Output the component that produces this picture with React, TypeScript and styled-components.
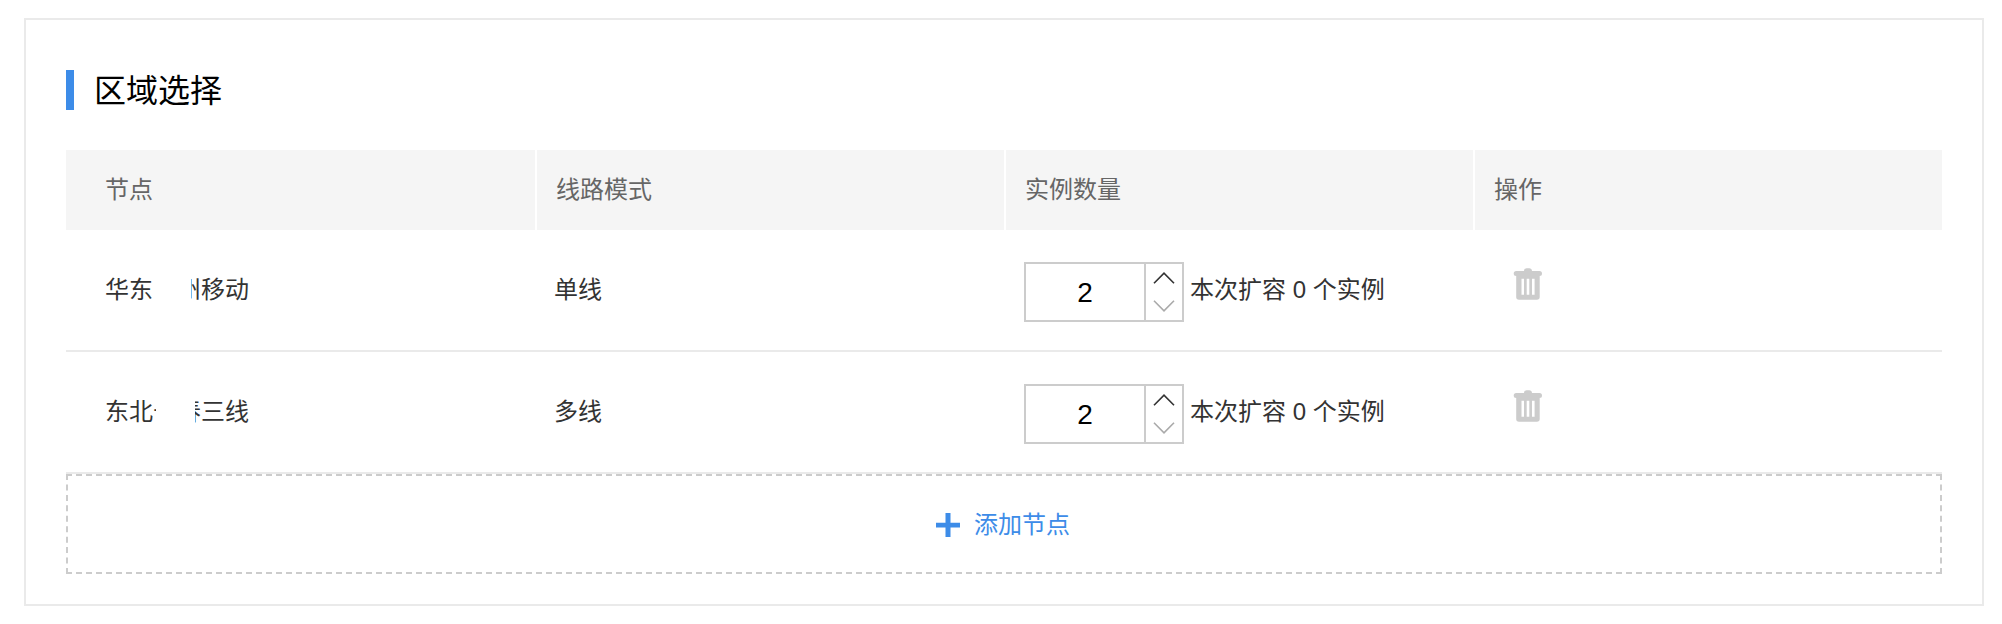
import React, { useState } from "react";
import styled, { createGlobalStyle } from "styled-components";

const GlobalStyle = createGlobalStyle`
  * { box-sizing: border-box; }
  body {
    margin: 0;
    background: #fff;
    color: #333;
    font-family: "Liberation Sans", "Noto Sans CJK SC", sans-serif;
    font-size: 24px;
    line-height: 36px;
  }
`;

const Panel = styled.section`
  margin: 18px 18px 18px 24px;
  padding: 50px 40px 30px;
  border: 2px solid #eaeaea;
`;

const Title = styled.h2`
  margin: 0 0 40px;
  padding: 2px 0 0 20px;
  border-left: 8px solid #3d8ce8;
  color: #000;
  font-size: 32px;
  font-weight: 400;
  line-height: 38px;
`;

const NodeTable = styled.table`
  width: 100%;
  table-layout: fixed;
  border-collapse: separate;
  border-spacing: 0;
`;

const HeadCell = styled.th`
  height: 80px;
  padding: 0 19px;
  background: #f5f5f5;
  color: #666;
  font-weight: 400;
  text-align: left;

  &:first-child { padding-left: 39px; }
  & + & { border-left: 2px solid #fff; }
`;

const Cell = styled.td`
  height: 122px;
  padding: 0 19px;
  border-bottom: 2px solid #eaeaea;

  &:first-child { padding-left: 39px; }
`;

const NodeName = styled.div`
  display: flex;
`;

const Fragment = styled.span<{ $width: number; $side: "start" | "end"; $gap?: number }>`
  display: flex;
  flex: none;
  justify-content: flex-${(p) => p.$side};
  width: ${(p) => p.$width}px;
  margin-left: ${(p) => p.$gap ?? 0}px;
  overflow: hidden;
`;

const Quantity = styled.div`
  display: flex;
  align-items: center;
  gap: 6px;
  padding-left: 1px;
`;

const Stepper = styled.div`
  display: flex;
  width: 160px;
  height: 60px;
  margin-top: 4px;
  border: 2px solid #ccc;
`;

const StepperInput = styled.input`
  flex: 1;
  min-width: 0;
  padding: 2px 0 0;
  border: 0;
  outline: 0;
  background: transparent;
  color: #000;
  font-family: "Liberation Sans", sans-serif;
  font-size: 28px;
  text-align: center;
`;

const StepperButtons = styled.div`
  display: flex;
  flex-direction: column;
  width: 38px;
  border-left: 2px solid #ccc;
`;

const StepButton = styled.button<{ $muted?: boolean }>`
  display: flex;
  flex: 1;
  align-items: center;
  justify-content: center;
  padding: 0;
  border: 0;
  background: none;
  color: ${(p) => (p.$muted ? "#aaa" : "#333")};
  cursor: pointer;
`;

const DeleteButton = styled.button`
  display: flex;
  margin: 0 0 12px 21px;
  padding: 0;
  border: 0;
  background: none;
  color: #ccc;
  cursor: pointer;
`;

const AddButton = styled.button`
  display: flex;
  align-items: center;
  justify-content: center;
  gap: 14px;
  width: 100%;
  height: 100px;
  padding: 2px 2px 0 0;
  border: 2px dashed #ccc;
  background: none;
  color: #3d8ce8;
  font: inherit;
  cursor: pointer;
`;

const Chevron = ({ down }: { down?: boolean }) => (
  <svg width="22" height="12" viewBox="0 0 22 12" fill="none" stroke="currentColor" strokeWidth="1.6" aria-hidden="true">
    <path d={down ? "M1 .8 11 10.8 21 .8" : "M1 11.2 11 1.2 21 11.2"} />
  </svg>
);

const TrashIcon = () => (
  <svg width="30" height="32" viewBox="0 0 30 32" fill="currentColor" aria-hidden="true">
    <path
      fillRule="evenodd"
      d="M11 3C11 1 12.3.2 13.7.2h2.6C17.7.2 19 1 19 3h7.5a2.5 2.5 0 0 1 0 5H26.7v21c0 1.8-1 2.8-2.8 2.8H6c-1.8 0-2.8-1-2.8-2.8V8a2.5 2.5 0 0 1 0-5zM8.5 10.7v16h2.5v-16zM13.7 10.7v16h2.6v-16zM19 10.7v16h2.6v-16z"
    />
  </svg>
);

const PlusIcon = () => (
  <svg width="24" height="24" viewBox="0 0 24 24" fill="currentColor" aria-hidden="true">
    <path d="M9.5 0h5v9.7H24v4.8h-9.5V24h-5v-9.5H0V9.7h9.5z" />
  </svg>
);

function QuantityField({ label }: { label: string }) {
  const [value, setValue] = useState(2);
  return (
    <Quantity>
      <Stepper>
        <StepperInput
          aria-label={label}
          inputMode="numeric"
          value={value}
          onChange={(e) => setValue(Number(e.target.value) || 0)}
        />
        <StepperButtons>
          <StepButton type="button" aria-label="+" onClick={() => setValue(value + 1)}>
            <Chevron />
          </StepButton>
          <StepButton type="button" aria-label="-" $muted onClick={() => setValue(Math.max(2, value - 1))}>
            <Chevron down />
          </StepButton>
        </StepperButtons>
      </Stepper>
      <span>本次扩容 {value - 2} 个实例</span>
    </Quantity>
  );
}

const rows = [
  {
    name: (
      <NodeName>
        华东
        <Fragment $width={10} $side="end" $gap={38}>州</Fragment>
        移动
      </NodeName>
    ),
    mode: "单线",
  },
  {
    name: (
      <NodeName>
        东北
        <Fragment $width={3} $side="start">长</Fragment>
        <Fragment $width={6} $side="end" $gap={39}>春</Fragment>
        三线
      </NodeName>
    ),
    mode: "多线",
  },
];

const columns = ["节点", "线路模式", "实例数量", "操作"];

export default function App() {
  return (
    <>
      <GlobalStyle />
      <Panel>
        <Title>区域选择</Title>
        <NodeTable>
          <thead>
            <tr>
              {columns.map((c) => (
                <HeadCell key={c} scope="col">{c}</HeadCell>
              ))}
            </tr>
          </thead>
          <tbody>
            {rows.map((row) => (
              <tr key={row.mode}>
                <Cell>{row.name}</Cell>
                <Cell>{row.mode}</Cell>
                <Cell><QuantityField label="实例数量" /></Cell>
                <Cell>
                  <DeleteButton type="button" aria-label="操作"><TrashIcon /></DeleteButton>
                </Cell>
              </tr>
            ))}
          </tbody>
        </NodeTable>
        <AddButton type="button">
          <PlusIcon />
          添加节点
        </AddButton>
      </Panel>
    </>
  );
}
